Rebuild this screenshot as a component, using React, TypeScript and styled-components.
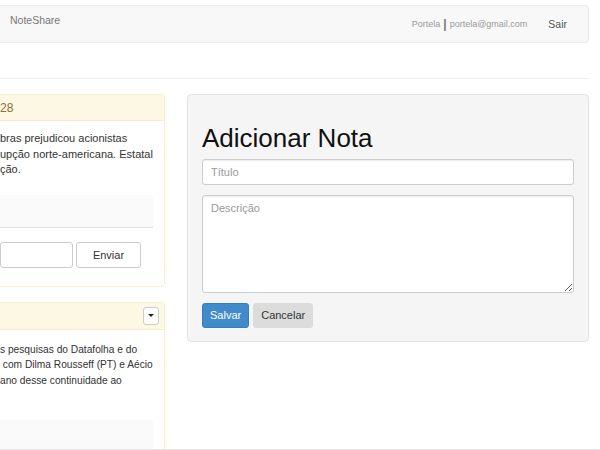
import React from "react";
import styled, { createGlobalStyle } from "styled-components";

const GlobalStyle = createGlobalStyle`
  html, body { margin: 0; padding: 0; background: #fff; }
  body {
    font-family: "Liberation Sans", Arial, sans-serif;
    color: #333;
    overflow: hidden;
  }
  * { box-sizing: border-box; }
`;

const Page = styled.div`
  width: 600px;
  height: 450px;
  overflow: hidden;
  border-bottom: 1px solid #e6e6e6;
`;

const Navbar = styled.nav`
  height: 38px;
  margin: 5px 11px 0 -20px;
  background: #f8f8f8;
  border: 1px solid #e7e7e7;
  border-radius: 4px;
  display: flex;
  align-items: center;
  justify-content: space-between;
  padding: 0 21px 0 29px;
`;

const Brand = styled.div`
  align-self: flex-start;
  margin-top: 8px;
  font-size: 10.5px;
  line-height: 12px;
  color: #777;
`;

const NavRight = styled.div`
  display: flex;
  align-items: center;
  gap: 21px;
`;

const UserInfo = styled.span`
  font-size: 9px;
  color: #9a9a9a;
  display: flex;
  align-items: center;
`;

const Sep = styled.span`
  font-size: 12px;
  color: #777;
  margin: 0 3px;
  font-weight: bold;
`;

const NavLink = styled.span`
  font-size: 10.5px;
  color: #555;
`;

const Rule = styled.hr`
  margin: 35px 11px 0 0;
  border: 0;
  border-top: 1px solid #eee;
  height: 0;
`;

const Row = styled.div`
  display: flex;
  gap: 22px;
  margin: 15px 11px 0 -20px;
  align-items: flex-start;
`;

const LeftCol = styled.div`
  width: 185px;
  flex: none;
  display: flex;
  flex-direction: column;
  gap: 15px;
`;

const Panel = styled.div`
  background: #fff;
  border: 1px solid #faebcc;
  border-radius: 4px;
`;

const PanelHeading = styled.div<{ $h: number }>`
  height: ${(p) => p.$h}px;
  background: #fcf8e3;
  border-bottom: 1px solid #faebcc;
  color: #8a6d3b;
  font-size: 12px;
  display: flex;
  align-items: center;
  justify-content: space-between;
  padding: 0 5px 0 19px;
  border-radius: 3px 3px 0 0;
`;

const CaretButton = styled.button`
  width: 16px;
  height: 18px;
  padding: 0;
  background: #fff;
  border: 1px solid #ccc;
  border-radius: 3px;
  display: flex;
  align-items: center;
  justify-content: center;
  &::after {
    content: "";
    border-left: 3px solid transparent;
    border-right: 3px solid transparent;
    border-top: 3px solid #222;
  }
`;

const PanelBody = styled.div<{ $pt: number; $pb: number }>`
  padding: ${(p) => p.$pt}px 11px ${(p) => p.$pb}px 19px;
`;

const Text = styled.p<{ $size: number }>`
  margin: 0;
  font-size: ${(p) => p.$size}px;
  line-height: 15.5px;
  color: #333;
  white-space: nowrap;
`;

const Comments = styled.div<{ $mt: number; $h: number }>`
  margin-top: ${(p) => p.$mt}px;
  height: ${(p) => p.$h}px;
  margin-left: -19px;
  background: #fafafa;
  border-bottom: 1px solid #e2e2e2;
`;

const CommentForm = styled.div`
  display: flex;
  gap: 3px;
  margin-top: 14px;
  width: 141px;
`;

const SmallInput = styled.input`
  flex: 1;
  min-width: 0;
  height: 26px;
  border: 1px solid #ccc;
  border-radius: 3px;
  background: #fff;
  font: inherit;
  font-size: 11px;
`;

const SendButton = styled.button`
  width: 65px;
  height: 26px;
  flex: none;
  background: #fff;
  border: 1px solid #ccc;
  border-radius: 3px;
  font-family: "Liberation Sans", Arial, sans-serif;
  font-size: 11px;
  color: #333;
`;

const Well = styled.div`
  flex: 1;
  background: #f5f5f5;
  border: 1px solid #e3e3e3;
  border-radius: 4px;
  padding: 14px 14px 13px;
  display: flex;
  flex-direction: column;
`;

const Title = styled.h1`
  margin: 15px 0 6px;
  font-size: 26px;
  line-height: 28.6px;
  font-weight: normal;
  color: #111;
`;

const Field = styled.input`
  height: 26px;
  width: 100%;
  border: 1px solid #ccc;
  border-radius: 3px;
  padding: 0 8px;
  background: #fff;
  font-family: "Liberation Sans", Arial, sans-serif;
  font-size: 11px;
  box-shadow: inset 0 1px 1px rgba(0, 0, 0, 0.075);
  &::placeholder { color: #999; }
`;

const Area = styled.textarea`
  margin-top: 10px;
  height: 98px;
  width: 100%;
  border: 1px solid #ccc;
  border-radius: 3px;
  padding: 5px 8px;
  background: #fff;
  font-family: "Liberation Sans", Arial, sans-serif;
  font-size: 11px;
  line-height: 15px;
  box-shadow: inset 0 1px 1px rgba(0, 0, 0, 0.075);
  &::placeholder { color: #999; }
`;

const Actions = styled.div`
  margin-top: 10px;
  display: flex;
  gap: 4px;
`;

const Btn = styled.button<{ $primary?: boolean }>`
  height: 25px;
  padding: 0 7px;
  border-radius: 3px;
  font-family: "Liberation Sans", Arial, sans-serif;
  font-size: 11px;
  border: 1px solid ${(p) => (p.$primary ? "#357ebd" : "#dcdcdc")};
  background: ${(p) => (p.$primary ? "#428bca" : "#dcdcdc")};
  color: ${(p) => (p.$primary ? "#fff" : "#333")};
`;

export default function App() {
  return (
    <>
      <GlobalStyle />
      <Page>
        <Navbar>
          <Brand>NoteShare</Brand>
          <NavRight>
            <UserInfo>
              Portela<Sep>|</Sep>portela@gmail.com
            </UserInfo>
            <NavLink>Sair</NavLink>
          </NavRight>
        </Navbar>
        <Rule />
        <Row>
          <LeftCol>
            <Panel>
              <PanelHeading $h={26}>28</PanelHeading>
              <PanelBody $pt={10} $pb={18}>
                <Text $size={11}>
                  bras prejudicou acionistas
                  <br />
                  upção norte-americana. Estatal
                  <br />
                  ção.
                </Text>
                <Comments $mt={17} $h={33} />
                <CommentForm>
                  <SmallInput />
                  <SendButton>Enviar</SendButton>
                </CommentForm>
              </PanelBody>
            </Panel>
            <Panel>
              <PanelHeading $h={27}>
                <span />
                <CaretButton aria-label="opções" />
              </PanelHeading>
              <PanelBody $pt={12} $pb={18}>
                <Text $size={10.2}>
                  s pesquisas do Datafolha e do
                  <br />
                  {"\u00a0"}com Dilma Rousseff (PT) e Aécio
                  <br />
                  ano desse continuidade ao
                </Text>
                <Comments $mt={32} $h={60} />
              </PanelBody>
            </Panel>
          </LeftCol>
          <Well>
            <Title>Adicionar Nota</Title>
            <Field placeholder="Título" />
            <Area placeholder="Descrição" />
            <Actions>
              <Btn $primary>Salvar</Btn>
              <Btn>Cancelar</Btn>
            </Actions>
          </Well>
        </Row>
      </Page>
    </>
  );
}
